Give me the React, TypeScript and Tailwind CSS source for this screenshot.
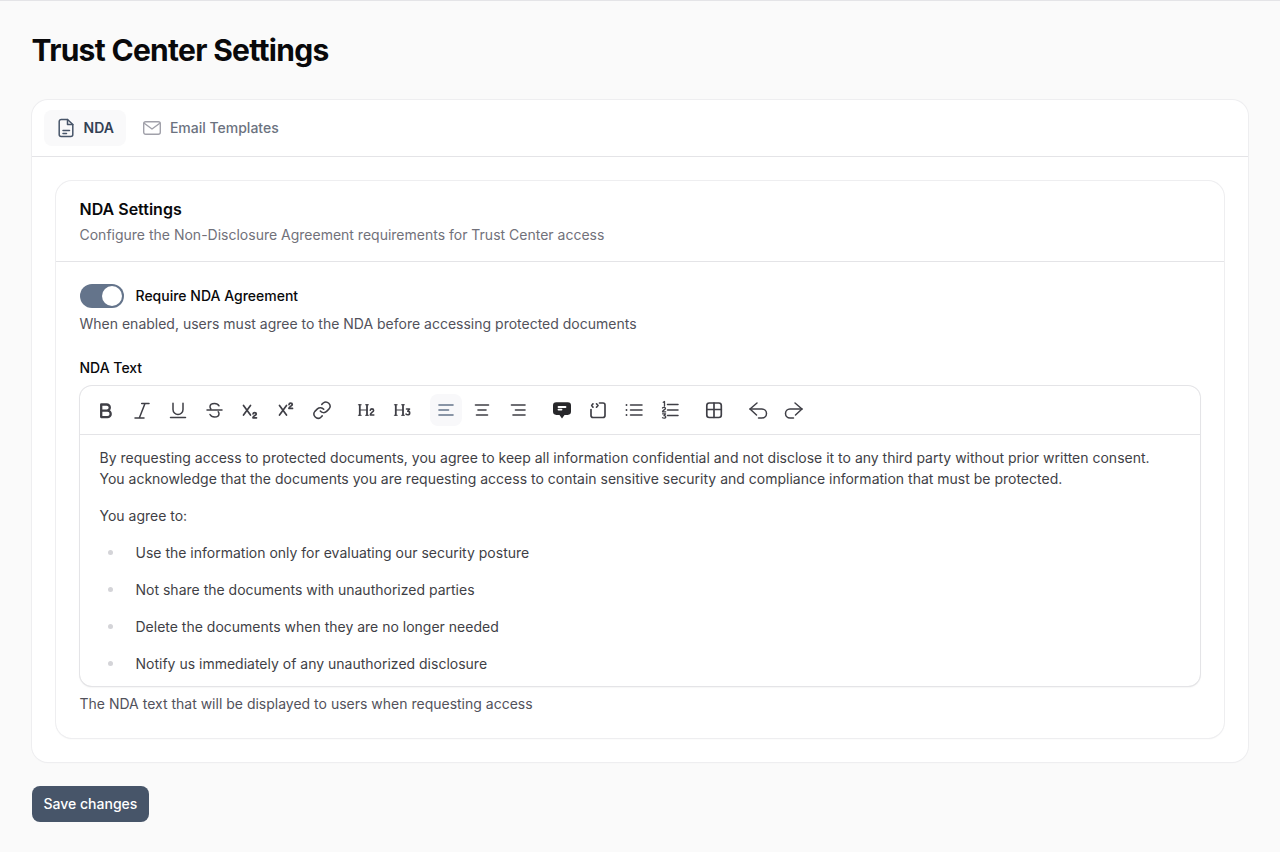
import React from "react";

const S = ({ children, w = 1.67 }: { children: React.ReactNode; w?: number }) => (
  <svg width="20" height="20" viewBox="0 0 20 20" fill="none" stroke="currentColor" strokeWidth={w} strokeLinecap="round" strokeLinejoin="round">
    {children}
  </svg>
);

const Btn = ({ children, active = false }: { children: React.ReactNode; active?: boolean }) => (
  <button className={"flex h-8 w-8 items-center justify-center rounded-lg " + (active ? "bg-[#f8f8fa] text-[#64748b]" : "text-[#3f3f46]")}>
    {children}
  </button>
);

const Group = ({ children }: { children: React.ReactNode }) => <div className="flex items-center gap-1">{children}</div>;

const Heading = ({ n }: { n: 2 | 3 }) => (
  <svg width="20" height="20" viewBox="0 0 20 20" fill="none" stroke="currentColor" strokeLinecap="round" strokeLinejoin="round">
    <path d="M3.800 5v10M11 5v10" strokeWidth="1.8" />
    <path d="M2.400 4.800h2.800M9.600 4.800h2.800M2.400 15.200h2.800M9.600 15.200h2.800M3.800 10H11" strokeWidth="1.100" />
    {n === 2 ? (
      <path d="M14.300 10.200c.2-.9.8-1.300 1.600-1.300 1 0 1.700.6 1.700 1.500 0 1.600-3.200 2.200-3.300 4.600h3.500" strokeWidth="1.600" />
    ) : (
      <path d="M14.500 9h3l-1.700 2.300c1.100 0 1.900.6 1.900 1.600s-.9 1.900-2 1.900c-.7 0-1.300-.3-1.700-.8" strokeWidth="1.600" />
    )}
  </svg>
);

export default function App() {
  return (
    <div className="min-h-[852px] border-t border-[#e4e4e7] bg-[#fafafa] pr-[32.5px] pl-[31.5px] font-['Inter',sans-serif] text-[14px]">
      <h1 className="pt-[29px] text-[30px] leading-[40px] font-bold tracking-[-0.7px] text-[#09090b]">Trust Center Settings</h1>

      <div className="mt-[30px] rounded-2xl bg-white shadow-[0_0_0_1px_#eeeef0,0_1px_2px_rgba(0,0,0,0.03)]">
        <div className="flex h-[57px] items-start gap-1 border-b border-[#e4e4e7] px-3 pt-[10px]">
          <div className="flex h-9 items-center gap-2 rounded-lg bg-[#f9f9fa] px-3 text-[14px] leading-5 font-semibold text-[#334155]">
            <svg width="20" height="20" viewBox="0 0 20 20" fill="none" stroke="#475569" strokeWidth="1.500" strokeLinecap="round" strokeLinejoin="round">
              <path d="M11.500 1.500H5.200a2 2 0 0 0-2 2v13a2 2 0 0 0 2 2h9.600a2 2 0 0 0 2-2V6.500z" />
              <path d="M11.500 1.500v5h5.300M7 12.500h6.500M7 15.500h3.500" />
            </svg>
            NDA
          </div>
          <div className="flex h-9 items-center gap-2 rounded-lg px-3 text-[14px] leading-5 font-medium text-[#6b7280]">
            <svg width="20" height="20" viewBox="0 0 20 20" fill="none" stroke="#a1a1aa" strokeWidth="1.400" strokeLinecap="round" strokeLinejoin="round">
              <rect x="1.700" y="3.700" width="16.600" height="12.600" rx="2" />
              <path d="M2.200 5.200L10 11l7.800-5.800" />
            </svg>
            Email Templates
          </div>
        </div>

        <div className="p-6">
          <div className="rounded-2xl shadow-[0_0_0_1px_#eeeef0,0_1px_2px_rgba(0,0,0,0.06)]">
            <div className="h-[81px] border-b border-[#e4e4e7] px-6 pt-[18px]">
              <h2 className="text-[16px] leading-5 font-semibold text-[#09090b]">NDA Settings</h2>
              <p className="mt-[6px] text-[14px] leading-5 text-[#71717a]">Configure the Non-Disclosure Agreement requirements for Trust Center access</p>
            </div>

            <div className="px-6 pt-[22px] pb-6">
              <div className="flex items-center gap-3">
                <div className="flex h-6 w-11 items-center justify-end rounded-full bg-[#64748b] pr-0.5">
                  <div className="h-5 w-5 rounded-full bg-white" />
                </div>
                <span className="text-[14px] leading-5 font-medium text-[#09090b]">Require NDA Agreement</span>
              </div>
              <p className="mt-[6px] text-[14px] leading-5 text-[#52525b]">When enabled, users must agree to the NDA before accessing protected documents</p>

              <div className="mt-[24px] text-[14px] leading-5 font-medium text-[#09090b]">NDA Text</div>

              <div className="mt-2 rounded-xl shadow-[0_0_0_1px_#e4e4e7,0_1px_2px_rgba(0,0,0,0.12)]">
                <div className="flex h-[49px] items-center gap-3 border-b border-[#e4e4e7] px-[10px]">
                  <Group>
                    <Btn>
                      <S w={2.3}>
                        <path d="M5.200 4.500h5.500a3.100 3.100 0 0 1 0 6.200H5.200zM5.200 10.700h6.300a3.200 3.200 0 0 1 0 6.400H5.200z" />
                      </S>
                    </Btn>
                    <Btn>
                      <S w={1.5}>
                        <path d="M9.700 3.500H17M3 18h9M13 3.500L7.300 18" />
                      </S>
                    </Btn>
                    <Btn>
                      <S w={1.5}>
                        <path d="M5 3.200v6.300a5 5 0 0 0 10 0V3.200M2.500 17.500h15" />
                      </S>
                    </Btn>
                    <Btn>
                      <S w={1.5}>
                        <path d="M3 10h15M15 5.800C14.200 4.300 12.500 3.500 10.500 3.500 8 3.500 6 4.700 6 6.700c0 .8.300 1.500.8 2M6 14.500c.8 1.500 2.500 2.500 4.500 2.500 2.500 0 4.500-1.200 4.500-3.300 0-.8-.3-1.500-.8-2" />
                      </S>
                    </Btn>
                    <Btn>
                      <S w={1.7}>
                        <path d="M3.500 5.500l7 9.500M10.500 5.500l-7 9.500" />
                        <path d="M13 14c.1-.9.7-1.400 1.600-1.400 1 0 1.700.5 1.700 1.300 0 1.500-3.300 1.800-3.400 3.900h3.600" />
                      </S>
                    </Btn>
                    <Btn>
                      <S w={1.7}>
                        <path d="M3.500 5.500l7 9.500M10.500 5.500l-7 9.500" />
                        <path d="M13 4.600c.1-.9.700-1.400 1.600-1.400 1 0 1.700.5 1.700 1.300 0 1.500-3.300 1.800-3.400 3.900h3.600" />
                      </S>
                    </Btn>
                    <Btn>
                      <S w={1.5}>
                        <path d="M8.300 11a4.200 4.200 0 0 0 6.300.4l2.500-2.500a4.200 4.200 0 0 0-5.900-5.900L9.800 4.400" />
                        <path d="M11.700 9.300a4.200 4.200 0 0 0-6.300-.4l-2.500 2.500a4.200 4.200 0 0 0 5.900 5.900l1.400-1.400" />
                      </S>
                    </Btn>
                  </Group>
                  <Group>
                    <Btn>
                      <Heading n={2} />
                    </Btn>
                    <Btn>
                      <Heading n={3} />
                    </Btn>
                  </Group>
                  <Group>
                    <Btn active>
                      <S>
                        <path d="M3 5h14M3 10h9.500M3 15h14" />
                      </S>
                    </Btn>
                    <Btn>
                      <S>
                        <path d="M3.500 5h13M6 10h8M4.500 15h11" />
                      </S>
                    </Btn>
                    <Btn>
                      <S>
                        <path d="M3.500 5h13.500M7.500 10h9.500M5 15h12" />
                      </S>
                    </Btn>
                  </Group>
                  <Group>
                    <Btn>
                      <svg width="20" height="20" viewBox="0 0 20 20">
                        <path fill="#27272a" d="M4.300 2.300h11.400a3.300 3.300 0 0 1 3.300 3.300v6a3.300 3.300 0 0 1-3.300 3.300h-3.200L10 18.500l-2.500-3.600H4.300A3.300 3.300 0 0 1 1 11.600v-6a3.300 3.300 0 0 1 3.300-3.300z" />
                        <path stroke="#fff" strokeWidth="1.800" strokeLinecap="round" d="M6.500 7h7M6.500 9.600h3" />
                      </svg>
                    </Btn>
                    <Btn>
                      <S>
                        <path d="M11.500 3H15a2 2 0 0 1 2 2v10.500a2 2 0 0 1-2 2H5a2 2 0 0 1-2-2V9.500" />
                        <path d="M5 3.800L3.700 5.500 5 7.200M8.500 3.800L10 5.500 8.500 7.200" />
                      </S>
                    </Btn>
                    <Btn>
                      <S w={1.5}>
                        <path d="M6.500 5H18M6.500 10H18M6.500 15H18" />
                        <path d="M2.500 5h.01M2.500 10h.01M2.500 15h.01" strokeWidth="1.900" />
                      </S>
                    </Btn>
                    <Btn>
                      <S w={1.5}>
                        <path d="M7.500 4.500H18M7.500 10H18M7.500 15.500H18" strokeWidth="1.500" />
                        <path d="M3.200 2.200L4.500 1.500V6M2.500 8c.3-.8 3-1 3 .5 0 1.200-3 1.700-3 3.300h3.200M2.600 13.800h3L4 15.700c1 0 1.800.4 1.800 1.200 0 1.200-2 1.500-3.300.8" strokeWidth="1.300" />
                      </S>
                    </Btn>
                  </Group>
                  <Group>
                    <Btn>
                      <S>
                        <rect x="2.800" y="3" width="14.500" height="14.500" rx="2.500" />
                        <path d="M2.800 9.500h14.500M10 3v14.500" />
                      </S>
                    </Btn>
                  </Group>
                  <Group>
                    <Btn>
                      <S w={1.5}>
                        <path d="M9 3L2 9l6.500 6" />
                        <path d="M2 9h12a4.500 4.500 0 0 1 0 9h-3.500" />
                      </S>
                    </Btn>
                    <Btn>
                      <S w={1.5}>
                        <path d="M11 3l7 6-6.500 6" />
                        <path d="M18 9H6a4.500 4.500 0 0 0 0 9h3.500" />
                      </S>
                    </Btn>
                  </Group>
                </div>

                <div className="h-[251px] overflow-hidden px-5 pt-3 text-[14px] leading-[21px] text-[#3f3f46]">
                  <p>
                    By requesting access to protected documents, you agree to keep all information confidential and not disclose it to any third party without prior written consent.
                    <br />
                    You acknowledge that the documents you are requesting access to contain sensitive security and compliance information that must be protected.
                  </p>
                  <p className="mt-4">You agree to:</p>
                  <ul className="mt-4 flex flex-col gap-4">
                    {[
                      "Use the information only for evaluating our security posture",
                      "Not share the documents with unauthorized parties",
                      "Delete the documents when they are no longer needed",
                      "Notify us immediately of any unauthorized disclosure",
                    ].map((t) => (
                      <li key={t} className="flex items-center">
                        <span className="ml-2 mr-[23px] h-[5px] w-[5px] rounded-full bg-[#d4d4d8]" />
                        {t}
                      </li>
                    ))}
                  </ul>
                </div>
              </div>

              <p className="mt-2 text-[14px] leading-5 text-[#52525b]">The NDA text that will be displayed to users when requesting access</p>
            </div>
          </div>
        </div>
      </div>

      <button className="mt-6 h-9 w-[117px] rounded-lg bg-[#475569] pl-3 text-left text-[14px] leading-5 font-medium text-white">Save changes</button>
    </div>
  );
}
